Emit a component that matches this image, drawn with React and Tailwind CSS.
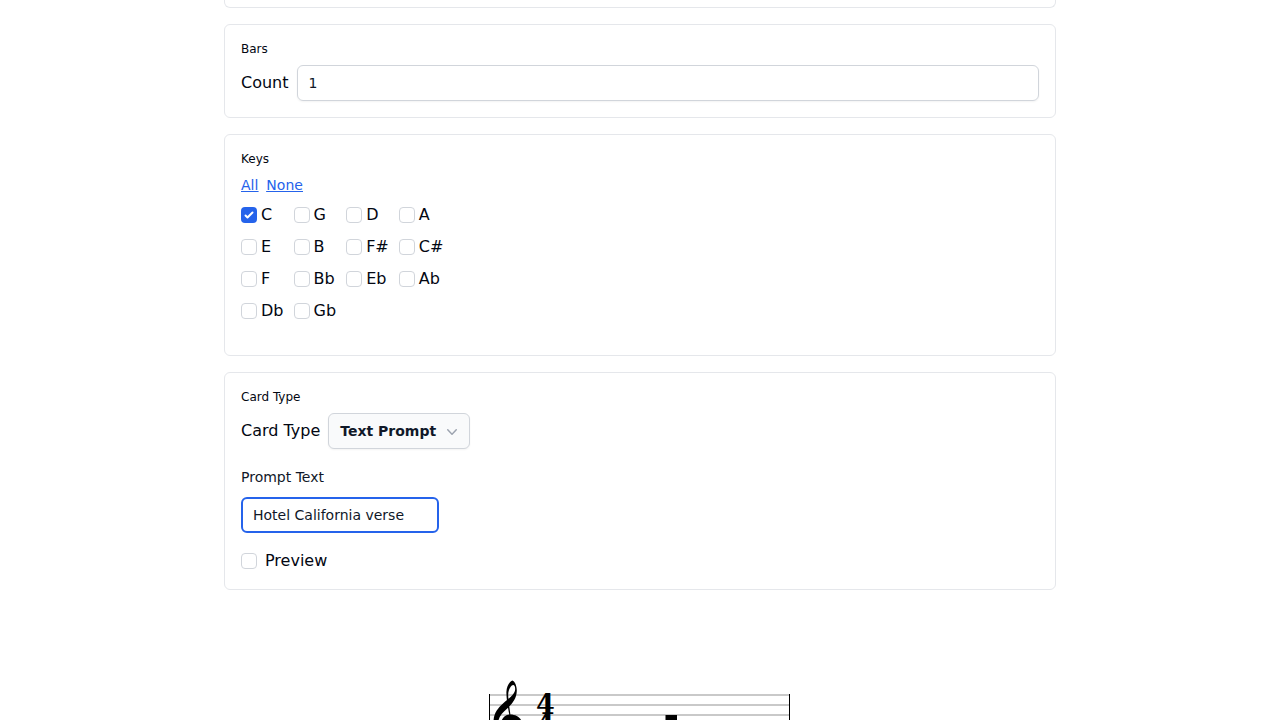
const KEYS = ["C", "G", "D", "A", "E", "B", "F#", "C#", "F", "Bb", "Eb", "Ab", "Db", "Gb"];

function Card({ title, children }) {
  return (
    <section className="flex flex-col gap-2 rounded-md border border-[#e5e7eb] p-4">
      <h2 className="text-xs">{title}</h2>
      {children}
    </section>
  );
}

function Checkbox({ checked }) {
  return (
    <span
      role="checkbox"
      aria-checked={!!checked}
      className={
        checked
          ? "flex size-4 shrink-0 items-center justify-center rounded-[4px] bg-[#2563eb] text-white"
          : "size-4 shrink-0 rounded-[4px] border border-[#d1d5db] bg-white"
      }
    >
      {checked && (
        <svg width="16" height="16" viewBox="0 0 16 16" fill="currentColor">
          <path d="M12.207 4.793a1 1 0 0 1 0 1.414l-5 5a1 1 0 0 1-1.414 0l-2-2a1 1 0 0 1 1.414-1.414L6.5 9.086l4.293-4.293a1 1 0 0 1 1.414 0z" />
        </svg>
      )}
    </span>
  );
}

function Staff() {
  return (
    <svg className="block" width="304" height="44" viewBox="486 676 304 44" role="img">
      <g fill="#c9c9c9">
        <rect x="489" y="694" width="301" height="2" />
        <rect x="489" y="704" width="301" height="2" />
        <rect x="489" y="714" width="301" height="2" />
      </g>
      <rect x="489" y="694" width="1" height="26" />
      <rect x="789" y="694" width="1" height="26" />
      <path d="M509.3 714.5C507.8 707 506.3 698 506.4 692C506.5 686 510 681.2 512.5 680.6C514.8 681.2 516.9 686.5 516.8 690.8C516.6 698.5 512.5 703.5 507.5 708.3C502.5 712.7 499 716.5 498.4 721H493.5C494 713 497.5 708.5 503 703.5C509.5 697.8 515 694.5 515.2 689C515.2 686.5 514.3 685 513.2 685C511 685.2 508.4 689.5 508.2 694.5C508.1 700 509.4 707 510.4 714.5C515.5 714.5 520 717 521.5 721H501.5C502.5 717.3 505.5 715 509.3 714.5Z" />
      <g fontFamily="DejaVu Serif, serif" fontWeight="700" fontSize="27" textAnchor="middle">
        <text x="545.3" y="714">4</text>
        <text x="545.3" y="733.5">4</text>
      </g>
      <rect x="665.5" y="715" width="11.5" height="5" />
    </svg>
  );
}

export default function App() {
  return (
    <div className="h-[720px] overflow-hidden bg-white font-['DejaVu_Sans',sans-serif] text-base text-gray-950">
      <main className="mx-auto flex w-[832px] flex-col gap-4">
        <div className="h-2 rounded-b-md border border-t-0 border-[#e5e7eb]" />
        <Card title="Bars">
          <div className="flex items-center gap-2">
            <span>Count</span>
            <div className="flex h-9 grow items-center rounded-md border border-[#d1d5db] px-[11px] text-sm text-gray-900 shadow-xs">1</div>
          </div>
        </Card>
        <Card title="Keys">
          <div className="flex gap-2 text-sm text-[#2563eb] underline">
            <a>All</a>
            <a>None</a>
          </div>
          <div className="mb-4 grid w-fit grid-cols-4 gap-2">
            {KEYS.map((key) => (
              <label key={key} className="flex items-center gap-1">
                <Checkbox checked={key === "C"} />
                {key}
              </label>
            ))}
          </div>
        </Card>
        <Card title="Card Type">
          <div className="flex items-center gap-2">
            <span>Card Type</span>
            <div className="flex h-9 w-[142px] items-center justify-between rounded-md border border-[#d1d5db] bg-[#f9fafb] pr-[7px] pl-[11px] text-sm font-semibold text-gray-900 shadow-xs">
              Text Prompt
              <svg className="mt-px size-5 text-[#9ca3af]" viewBox="0 0 20 20" fill="currentColor">
                <path
                  fillRule="evenodd"
                  clipRule="evenodd"
                  d="M5.23 7.21a.75.75 0 0 1 1.06.02L10 11.168l3.71-3.938a.75.75 0 1 1 1.08 1.04l-4.25 4.5a.75.75 0 0 1-1.08 0l-4.25-4.5a.75.75 0 0 1 .02-1.06Z"
                />
              </svg>
            </div>
          </div>
          <div className="mt-2.5 flex flex-col gap-2.5 text-sm text-gray-900">
            <span>Prompt Text</span>
            <div className="flex h-9 w-[198px] items-center rounded-md border-2 border-[#2563eb] px-2.5">Hotel California verse</div>
          </div>
          <label className="mt-2 flex items-center gap-2">
            <Checkbox />
            Preview
          </label>
        </Card>
        <div className="mt-[70px] pl-[262px]">
          <Staff />
        </div>
      </main>
    </div>
  );
}
